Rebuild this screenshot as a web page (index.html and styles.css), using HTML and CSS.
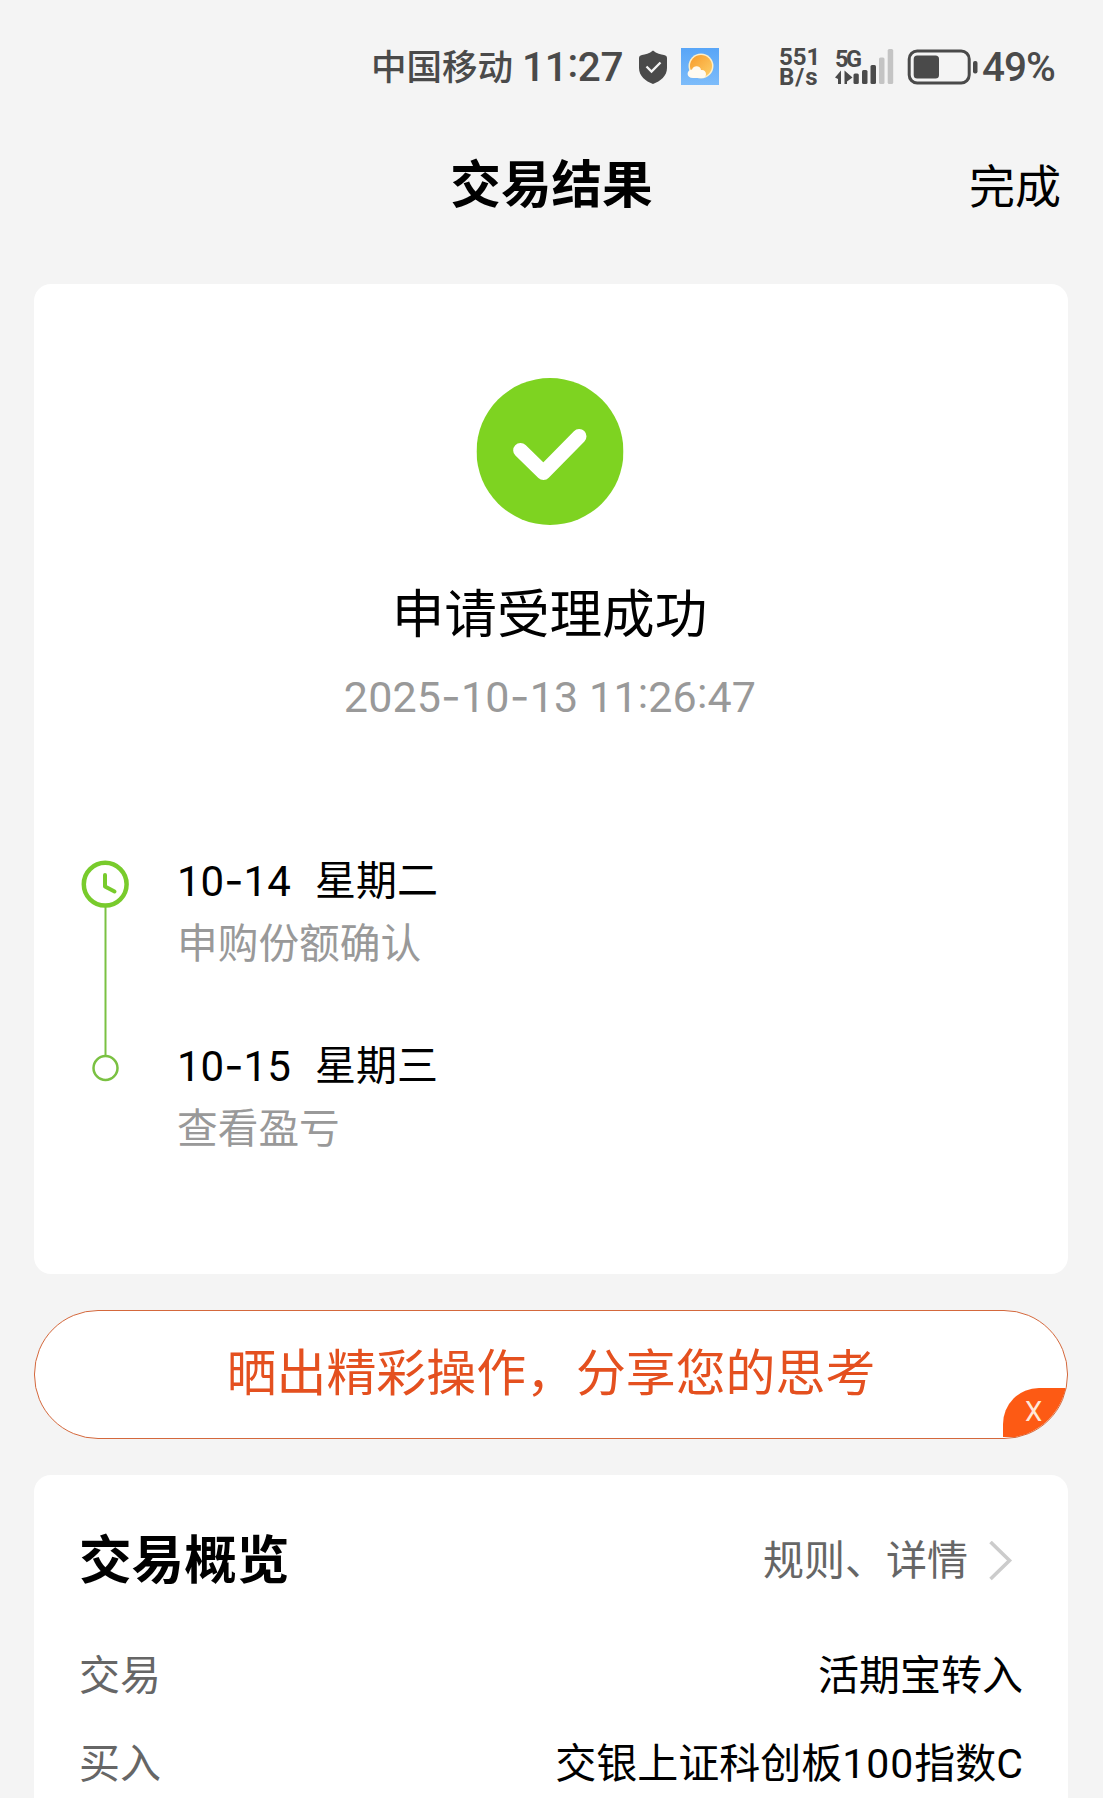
FILE: index.html
```html
<!DOCTYPE html>
<html lang="zh-CN">
<head>
<meta charset="utf-8">
<title>交易结果</title>
<link rel="stylesheet" href="styles.css">
</head>
<body>
<div class="status">
  <span class="carrier">中国移动</span>
  <span class="time">11<span class="colon">:</span>27</span>
  <svg class="shield" width="30" height="34" viewBox="0 0 30 34"><path d="M15 .5C18.500 3.500 23 4.500 26 5c2 .3 3 1.500 3 3.200V18c0 8-6.500 13.200-14 16C7.500 31.200 1 26 1 18V8.200C1 6.500 2 5.300 4 5c3-.5 7.500-1.500 11-4.500z" fill="#4a4a4a"/><path d="M8.500 16.500l5 5L22.500 12.500" fill="none" stroke="#f4f4f4" stroke-width="2.300"/></svg>
  <svg class="weather" width="38" height="37" viewBox="0 0 38 37">
    <defs><linearGradient id="sky" x1="0" y1="0" x2="0" y2="1"><stop offset="0" stop-color="#58a5f7"/><stop offset="1" stop-color="#7dbcfa"/></linearGradient><linearGradient id="sun" x1="0" y1="0" x2="1" y2="1"><stop offset="0" stop-color="#f79a2a"/><stop offset="1" stop-color="#fdd06a"/></linearGradient></defs>
    <path d="M0 0h38v37H0z" fill="url(#sky)"/><circle cx="20" cy="18" r="12.500" fill="#fff0c8"/><circle cx="20" cy="18" r="11" fill="url(#sun)"/>
    <path d="M12 30c-7 0-7-8-1-8.500C13 16 20 18 20 22c6-1 7 8 1 8z" fill="#fffaf0"/>
  </svg>
  <span class="speed"><span>551</span><span class="unit">B/s</span></span>
  <span class="signal"><span class="net">5G</span>
    <svg width="60" height="40" viewBox="0 0 60 40"><g fill="#4a4a4a"><path d="M0 29.500l6-7V36H3v-5zM9.500 22.500l8 7-5.500 4V36H9.500z"/><rect x="18.500" y="25.500" width="5.300" height="10.500" rx="1.500"/><rect x="27" y="22" width="5.500" height="14" rx="1.500"/><rect x="35.500" y="17" width="5.500" height="19" rx="1.500"/></g><g fill="#c4c4c4"><rect x="44" y="9.500" width="5.500" height="26.500" rx="1.500"/><rect x="52.700" y="1" width="5.500" height="35" rx="1.500"/></g></svg>
  </span>
  <svg class="battery" width="71" height="36" viewBox="0 0 71 36"><rect x="2.200" y="2" width="60" height="32" rx="8" fill="none" stroke="#4a4a4a" stroke-width="3"/><rect x="6.700" y="6.500" width="25.300" height="23" rx="3.500" fill="#4a4a4a"/><rect x="66" y="12" width="4.500" height="12.500" rx="2" fill="#4a4a4a"/></svg>
  <span class="percent">49%</span>
</div>

<header class="nav">
  <h1>交易结果</h1>
  <a class="done">完成</a>
</header>

<main>
  <section class="card result">
    <svg class="ok" width="147" height="147" viewBox="0 0 441 441"><circle cx="220.500" cy="220.500" r="220.500" fill="#7ed321"/><path d="M132 217l69 67L308 175" fill="none" stroke="#fff" stroke-width="44" stroke-linecap="round" stroke-linejoin="round"/></svg>
    <h2>申请受理成功</h2>
    <p class="stamp">2025<span class="dash">-</span>10<span class="dash">-</span>13 11<span class="colon">:</span>26<span class="colon">:</span>47</p>
    <div class="timeline">
      <svg class="rail" width="50" height="222" viewBox="0 0 50 222"><g fill="none" stroke="#7ac142"><circle cx="24.200" cy="24.200" r="21.400" stroke="#78cb2c" stroke-width="4.500"/><path d="M24 15v11.500l9.500 5" stroke="#78cb2c" stroke-width="4" stroke-linecap="round" stroke-linejoin="round"/><path d="M24.500 47v149" stroke-width="2"/><circle cx="24.500" cy="208" r="12" stroke-width="2.500"/></g></svg>
      <ol>
        <li><div class="day"><span class="date">10<span class="dash">-</span>14</span><span>星期二</span></div><div class="note">申购份额确认</div></li>
        <li><div class="day"><span class="date">10<span class="dash">-</span>15</span><span>星期三</span></div><div class="note">查看盈亏</div></li>
      </ol>
    </div>
  </section>

  <div class="share">晒出精彩操作，分享您的思考<span class="close">X</span></div>

  <section class="card overview">
    <div class="row head"><h3>交易概览</h3><a class="more">规则、详情<svg width="25" height="40" viewBox="0 0 25 40"><path d="M2.500 1L21.500 19.500 2.500 38" fill="none" stroke="#ccc" stroke-width="3.600"/></svg></a></div>
    <div class="row"><span class="label">交易</span><span>活期宝转入</span></div>
    <div class="row"><span class="label">买入</span><span>交银上证科创板<span class="num">100</span>指数C</span></div>
  </section>
</main>
</body>
</html>
```
FILE: styles.css
```css
* { box-sizing: border-box; margin: 0; padding: 0; }
html, body { height: 1798px; overflow: hidden; }
body { background: #f4f4f4; color: #000; font-family: Roboto, "Noto Sans CJK SC", sans-serif; white-space: nowrap; }
svg { display: block; flex: none; }

.status { display: flex; align-items: center; height: 134px; padding-left: 371px; color: #4a4a4a; font-weight: 500; }
.status > * { flex: none; }
.carrier { width: 151px; font-size: 35.5px; line-height: 40px; padding-top: 2px; }
.time { width: 116px; font-size: 40.5px; letter-spacing: -.3px; line-height: 40px; }
.weather { margin: 0 0 2px 13px; }
.speed { display: flex; flex-direction: column; width: 56px; margin-left: 60px; font-size: 24px; line-height: 20px; font-weight: 700; }
.unit { letter-spacing: 1px; }
.signal { position: relative; width: 72px; height: 38px; }
.net { position: absolute; left: 0; top: 0; font-size: 23.5px; line-height: 22px; font-weight: 700; letter-spacing: -2.5px; }
.battery { margin-right: 4px; margin-bottom: 1px; }
.percent { font-size: 40.5px; line-height: 40px; letter-spacing: -1px; }

.colon { position: relative; top: -4px; }
.dash { font-family: Inter, sans-serif; }

.nav { display: grid; grid-template-columns: 1fr auto 1fr; align-items: center; height: 104px; margin-bottom: 46px; padding: 0 42px; }
.nav h1 { grid-column: 2; font-size: 50.6px; line-height: 60px; font-weight: 700; }
.done { justify-self: end; font-size: 46px; line-height: 60px; padding-top: 1px; }

main { display: flex; flex-direction: column; gap: 36px; padding: 0 35px 0 34px; }
.card { background: #fff; border-radius: 17px; }

.result { height: 990px; padding: 94px 48px 0 46px; }
.ok { margin: 0 auto; transform: translateX(-.5px); }
.result h2 { margin-top: 58px; margin-left: -1px; font-size: 52.6px; line-height: 64px; font-weight: 400; text-align: center; }
.stamp { margin-top: 21px; font-size: 43px; line-height: 56px; letter-spacing: .15px; color: #999; text-align: center; }

.timeline { display: flex; gap: 46px; margin-top: 129px; padding-left: 1px; font-size: 41px; line-height: 54px; }
.rail { margin-top: 6px; }
.timeline ol { list-style: none; display: flex; flex-direction: column; gap: 68px; }
.timeline li { display: flex; flex-direction: column; gap: 8px; }
.day { display: flex; }
.date { width: 138px; font-size: 42px; }
.note { color: #999; font-size: 40.7px; }

.share { position: relative; display: flex; align-items: center; justify-content: center; height: 129px; padding-bottom: 1px; overflow: hidden; background: #fff; border: 1.5px solid #d4683c; border-radius: 64px; color: #e4501f; font-size: 49.9px; line-height: 60px; }
.close { position: absolute; right: 0; bottom: 1px; width: 64px; height: 49px; padding-right: 3px; border-radius: 36px 0 0 0; background: #fd5a14; color: #ffe8d8; font-size: 27.5px; line-height: 48px; text-align: center; }

.overview { height: 400px; padding: 56px 45px 0 45px; }
.row { display: flex; justify-content: space-between; align-items: center; height: 60px; margin-bottom: 28px; font-size: 41px; line-height: 60px; }
.head { margin-bottom: 55px; }
.head h3 { font-size: 52.6px; font-weight: 700; }
.more { display: flex; align-items: center; gap: 20px; padding-right: 10px; color: #666; }
.label { color: #666; }
.num { letter-spacing: 1px; }
```
